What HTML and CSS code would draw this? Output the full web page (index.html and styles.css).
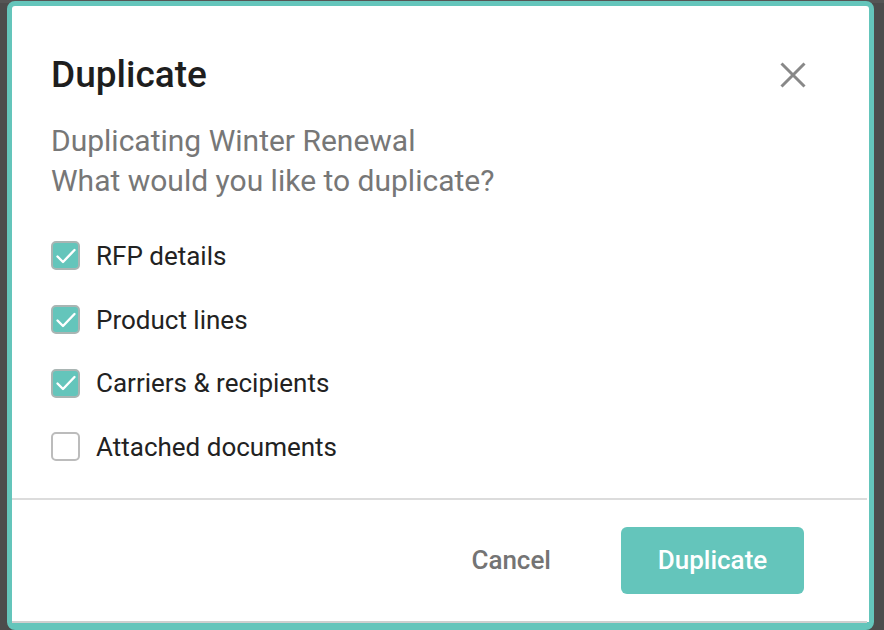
FILE: index.html
```html
<!DOCTYPE html>
<html>
	<head>
		<meta charset="UTF-8">
		<title>Duplicate</title>
		<link rel="stylesheet" href="styles.css">
	</head>
	<body>
		<div class="backdrop"></div>
		<div class="dialog">
			<div class="dlg-head">
				<h2 class="dlg-title">Duplicate</h2>
				<span class="close">
					<svg width="26" height="26" viewBox="0 0 26 26"><path d="M1.5 1.5L24.5 24.5M24.5 1.5L1.5 24.5" stroke="#888" stroke-width="3" fill="none"/></svg>
				</span>
			</div>
			<p class="dlg-sub">Duplicating Winter Renewal<br/>What would you like to duplicate?</p>
			<ul class="opts">
				<li><span class="cb on"><svg width="24" height="24" viewBox="0 0 24 24"><path d="M3.5 12.5L9 18L20.5 6" stroke="#fff" stroke-width="2.4" fill="none" stroke-linecap="round" stroke-linejoin="round"/></svg></span>RFP details</li>
				<li><span class="cb on"><svg width="24" height="24" viewBox="0 0 24 24"><path d="M3.5 12.5L9 18L20.5 6" stroke="#fff" stroke-width="2.4" fill="none" stroke-linecap="round" stroke-linejoin="round"/></svg></span>Product lines</li>
				<li><span class="cb on"><svg width="24" height="24" viewBox="0 0 24 24"><path d="M3.5 12.5L9 18L20.5 6" stroke="#fff" stroke-width="2.4" fill="none" stroke-linecap="round" stroke-linejoin="round"/></svg></span>Carriers &amp; recipients</li>
				<li><span class="cb"></span>Attached documents</li>
			</ul>
			<div class="dlg-foot">
				<a href="#" class="btn-cancel">Cancel</a>
				<a href="#" class="btn-main">Duplicate</a>
			</div>
		</div>
	</body>
</html>
```
FILE: styles.css
```css
*{margin: 0;padding: 0;box-sizing: border-box;}
a{text-decoration: none;}
ul,li{list-style: none;}
html,body{height: 100%;overflow: hidden;}
body{background: #4c4c4c;font-family: Roboto, "Liberation Sans", sans-serif;padding: 1px 10px 0 7px;}
.backdrop{position: absolute;top: 0;left: 0;right: 0;height: 3px;background: #555;}
.dialog{position: relative;background: #fff;border: 5px solid #64c5bb;border-bottom-width: 8px;border-radius: 8px;height: 629px;}
.dlg-head{display: flex;align-items: center;justify-content: space-between;padding: 49px 63px 0 39px;}
.dlg-title{font-size: 37px;line-height: 40px;font-weight: 500;color: #1e1e1e;}
.close{display: flex;width: 26px;height: 26px;}
.dlg-sub{font-size: 30px;line-height: 40px;color: #777;padding-left: 39px;margin-top: 26px;}
.opts{padding: 23px 0 19px 39px;}
.opts li{display: flex;align-items: center;height: 63.7px;font-size: 26px;color: #222;}
.cb{display: flex;align-items: center;justify-content: center;width: 29px;height: 29px;border: 2px solid #bcbcbc;border-radius: 5px;margin-right: 16px;background: #fff;}
.cb.on{background: #64c5bb;border-color: #a9b5b3;}
.dlg-foot{display: flex;justify-content: flex-end;align-items: center;border-top: 2px solid #dcdcdc;border-bottom: 2px solid #cfcfcf;padding: 27px 63px 27px 0;margin-right: 2px;}
.btn-cancel{font-size: 26px;font-weight: 500;color: #747474;margin-right: 70px;}
.btn-main{display: flex;align-items: center;justify-content: center;width: 183px;height: 67px;background: #64c5bb;border-radius: 6px;color: #fff;font-size: 26px;font-weight: 500;}
```
